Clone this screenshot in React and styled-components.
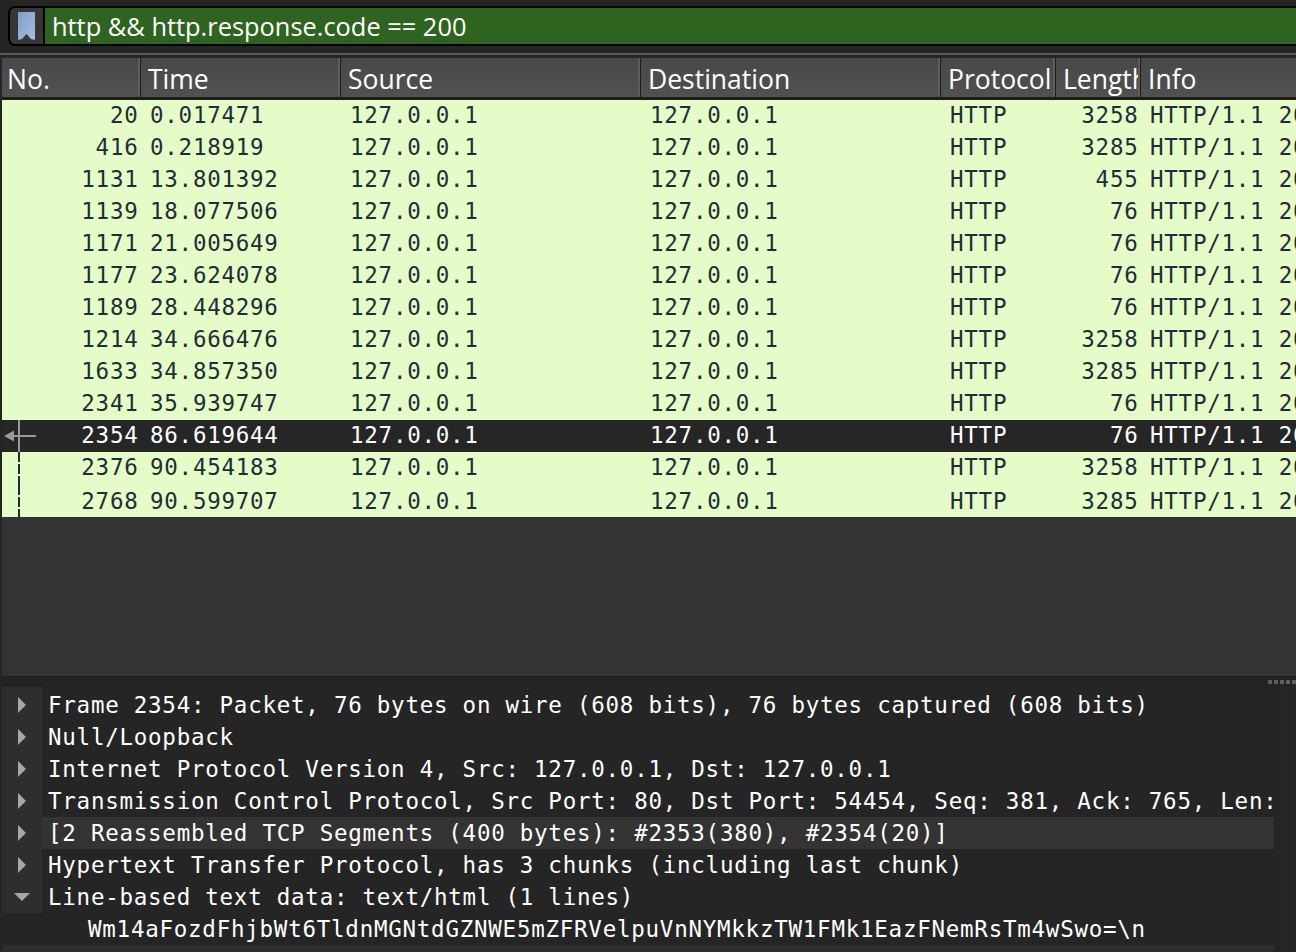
import React from 'react';
import styled, { createGlobalStyle } from 'styled-components';

const Global = createGlobalStyle`
  html, body { margin: 0; padding: 0; background: #252525; overflow: hidden; }
  #root { width: 1296px; height: 952px; }
`;
const mono = `"DejaVu Sans Mono", monospace`;
const COLS = '139px 200px 300px 300px 115px 85px 1fr';

const Page = styled.div`
  width: 1296px; height: 952px; display: flex; flex-direction: column;
  background: #252525; overflow: hidden;
`;
const FilterBar = styled.div`
  height: 47px; box-sizing: border-box; padding: 6px 0 0 8px; flex: none;
`;
const FilterFrame = styled.div`
  height: 40px; box-sizing: border-box; display: flex; background: #000;
  border: 2px solid #000; border-right: 0; border-radius: 7px 0 0 7px;
`;
const BookmarkButton = styled.div`
  width: 33px; flex: none; background: #363636; display: flex; align-items: center;
  justify-content: center; margin-right: 2px; border-radius: 5px 0 0 5px;
`;
const FilterInput = styled.div`
  flex: 1; background: #2f6320; color: #fff; font: 25.4px/37px "Open Sans", sans-serif;
  padding-left: 7px; white-space: nowrap;
`;
const Rule = styled.div`
  height: 2px; margin-top: 6px; background: #5a5a5a; flex: none;
`;
const ListPane = styled.div`
  height: 619px; margin: 3px 0 0 2px; flex: none; background: #333; display: flex; flex-direction: column;
  border-bottom: 1px solid #1e1e1e; box-sizing: border-box;
`;
const HeaderRow = styled.div`
  display: grid; grid-template-columns: ${COLS}; height: 42px; flex: none;
  background: #1c1c1c; box-sizing: border-box; padding-bottom: 3px;
`;
const HeaderCell = styled.div`
  background: linear-gradient(#484848, #515151); color: #fff;
  font: 26.5px/42px "Open Sans", sans-serif; padding-left: ${p => p.$pad}px; overflow: hidden;
  white-space: nowrap; border-right: 2px solid #5e5e5e; margin-right: 1px; box-sizing: border-box;
  &:last-child { border-right: 0; margin-right: 0; }
`;
const PacketRow = styled.div`
  display: grid; grid-template-columns: ${COLS}; height: ${p => p.$h}px; flex: none;
  background: ${p => p.$sel ? '#262626' : '#e5fcc9'};
  color: ${p => p.$sel ? '#fff' : '#1f2d36'};
  font: 22.5px/${p => p.$lh}px ${mono}; letter-spacing: 0.75px; position: relative;
`;
const Cell = styled.div`
  overflow: hidden; white-space: nowrap; box-sizing: border-box;
  text-align: ${p => p.$right ? 'right' : 'left'};
  padding: ${p => p.$right ? '0 2.5px 0 0' : '0 0 0 9px'};
`;
const Marker = styled.svg`
  position: absolute; left: 0; top: 0; width: 36px; height: 100%;
`;
const Splitter = styled.div`
  height: 10px; flex: none; display: flex; justify-content: flex-end; align-items: center;
  gap: 2px; background: #232323;
`;
const Grip = styled.i`
  width: 4px; height: 4px; background: #5d5d5d; display: block;
`;
const DetailPane = styled.div`
  flex: 1; display: flex; margin-left: 2px; min-height: 0;
`;
const Tree = styled.div`
  width: 1272px; flex: none; padding-top: 2px; overflow: hidden;
  background: linear-gradient(90deg, #2e2e2e 40px, transparent 40px) no-repeat;
  background-size: 100% 2px;
`;
const TreeRow = styled.div`
  display: flex; height: 32px; background: ${p => p.$hl ? '#333' : 'transparent'};
`;
const Toggle = styled.div`
  width: 40px; flex: none; background: #2e2e2e; display: flex; align-items: center; justify-content: center;
`;
const Spacer = styled.div`
  width: 46px; flex: none;
`;
const TreeText = styled.div`
  font: 22.5px/32px ${mono}; letter-spacing: 0.75px; color: #fff; white-space: nowrap;
  padding-left: ${p => p.$indent || 6}px; overflow: hidden;
`;
const Footer = styled.div`
  height: 7px; background: #2e2e2e;
`;
const ScrollTrack = styled.div`
  flex: 1; margin-left: 11px; border-left: 1px solid #2c2c2c;
`;

const rows = [
  ['20','0.017471','3258'],['416','0.218919','3285'],['1131','13.801392','455'],
  ['1139','18.077506','76'],['1171','21.005649','76'],['1177','23.624078','76'],
  ['1189','28.448296','76'],['1214','34.666476','3258'],['1633','34.857350','3285'],
  ['2341','35.939747','76'],['2354','86.619644','76'],['2376','90.454183','3258'],
  ['2768','90.599707','3285'],
];
const headers = [['No.',5],['Time',7],['Source',7],['Destination',7],['Protocol',7],['Length',7],['Info',7]];
const tree = [
  'Frame 2354: Packet, 76 bytes on wire (608 bits), 76 bytes captured (608 bits)',
  'Null/Loopback',
  'Internet Protocol Version 4, Src: 127.0.0.1, Dst: 127.0.0.1',
  'Transmission Control Protocol, Src Port: 80, Dst Port: 54454, Seq: 381, Ack: 765, Len: 20',
  '[2 Reassembled TCP Segments (400 bytes): #2353(380), #2354(20)]',
  'Hypertext Transfer Protocol, has 3 chunks (including last chunk)',
  'Line-based text data: text/html (1 lines)',
];

const Right = () => <svg width="10" height="16" viewBox="0 0 10 16"><path d="M1 0l8 8-8 8z" fill="#a6a6a6"/></svg>;
const Down = () => <svg width="16" height="10" viewBox="0 0 16 10"><path d="M0 1h16l-8 8z" fill="#a6a6a6"/></svg>;

const RowMarker = ({ index }) => {
  if (index === 10) return (
    <Marker viewBox="0 0 36 32" preserveAspectRatio="none">
      <path d="M2 16l10-5.5v4.5h22v2H12v4.5z" fill="#999"/>
      <rect x="16" y="0" width="2" height="32" fill="#999"/>
    </Marker>
  );
  if (index > 10) return (
    <Marker viewBox={index === 11 ? '0 0 36 32' : '0 0 36 33'} preserveAspectRatio="none">
      <path d={index === 11 ? 'M17 0v10M17 12v10M17 24v8' : 'M17 0v11M17 13v10M17 25v8'} stroke="#1f2d36" strokeWidth="2" fill="none"/>
    </Marker>
  );
  return null;
};

export default function App() {
  return (
    <Page>
      <Global />
      <FilterBar>
        <FilterFrame>
          <BookmarkButton>
            <svg width="17" height="28" viewBox="0 0 17 28">
              <defs><linearGradient id="bm" x1="0" y1="0" x2="1" y2="1"><stop offset="0" stopColor="#7f9fc8"/><stop offset="1" stopColor="#a3bfdf"/></linearGradient></defs>
              <path d="M0 0h17v28l-4-1-4.5-5-4.5 5-4 1z" fill="url(#bm)"/>
            </svg>
          </BookmarkButton>
          <FilterInput>http &amp;&amp; http.response.code == 200</FilterInput>
        </FilterFrame>
      </FilterBar>
      <Rule />
      <ListPane>
        <HeaderRow>
          {headers.map(([h, pad]) => <HeaderCell key={h} $pad={pad}>{h}</HeaderCell>)}
        </HeaderRow>
        {rows.map((r, i) => (
          <PacketRow key={r[0]} $sel={i === 10} $h={i === 12 ? 33 : 32} $lh={i === 12 ? 34 : 31}>
            <RowMarker index={i} />
            <Cell $right>{r[0]}</Cell>
            <Cell>{r[1]}</Cell>
            <Cell>127.0.0.1</Cell>
            <Cell>127.0.0.1</Cell>
            <Cell>HTTP</Cell>
            <Cell $right>{r[2]}</Cell>
            <Cell>HTTP/1.1 200 OK</Cell>
          </PacketRow>
        ))}
      </ListPane>
      <Splitter>{[0,1,2,3,4].map(i => <Grip key={i} />)}</Splitter>
      <DetailPane>
        <Tree>
          {tree.map((t, i) => (
            <TreeRow key={t} $hl={i === 4}>
              <Toggle>{i === 6 ? <Down /> : <Right />}</Toggle>
              <TreeText>{t}</TreeText>
            </TreeRow>
          ))}
          <TreeRow>
            <Spacer />
            <TreeText $indent={40}>Wm14aFozdFhjbWt6TldnMGNtdGZNWE5mZFRVelpuVnNYMkkzTW1FMk1EazFNemRsTm4wSwo=\n</TreeText>
          </TreeRow>
          <Footer />
        </Tree>
        <ScrollTrack />
      </DetailPane>
    </Page>
  );
}
